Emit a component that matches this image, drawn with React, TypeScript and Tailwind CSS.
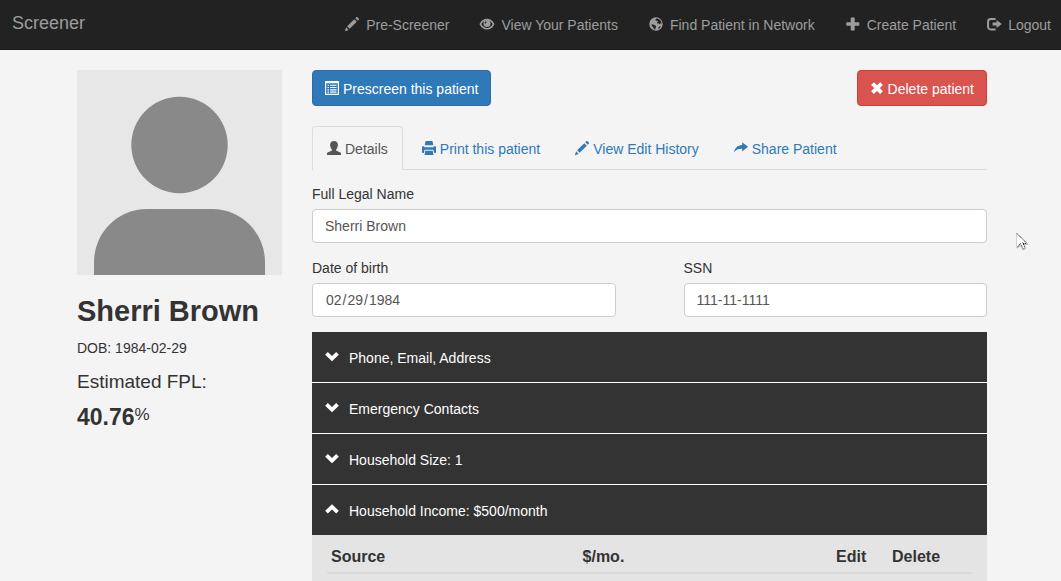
import type { ReactNode } from "react";

function Icon({ children }: { children: ReactNode }) {
  return (
    <svg
      className="mb-[2px] h-[14px] w-[14px] shrink-0 overflow-visible"
      viewBox="0 0 14 14"
      fill="currentColor"
      aria-hidden="true"
    >
      {children}
    </svg>
  );
}

const Pencil = () => (
  <Icon>
    <path
      transform="translate(0 14) scale(0.011667 -0.011667)"
      d="M1011 1210q19 0 33 -13l153 -153q13 -14 13 -33t-13 -33l-99 -92l-214 214l95 96q13 14 32 14zM1013 800l-615 -614l-214 214l614 614zM317 96l-333 -112l110 335z"
    />
  </Icon>
);

const Eye = () => (
  <Icon>
    <path
      d="M.4 7.200C1.900 4.200 4.200 2.600 7 2.600S12.100 4.200 13.600 7.200C12.100 10.200 9.800 11.800 7 11.800S1.900 10.200 .4 7.200Z"
      fill="none"
      stroke="currentColor"
      strokeWidth="1.600"
    />
    <path
      fillRule="evenodd"
      d="M7 3A3.500 3.500 0 1 0 7 10A3.500 3.500 0 1 0 7 3ZM6.500 4.200C5.300 4.400 4.600 5.200 4.600 6.500C5.600 6.600 6.600 5.800 6.500 4.200Z"
    />
  </Icon>
);

const Globe = () => (
  <Icon>
    <path
      fillRule="evenodd"
      d="M7 .3a6.700 6.700 0 1 0 0 13.400A6.700 6.700 0 0 0 7 .3ZM7.600 1.500L9.100 1.800L11.200 3.100L12.300 5.200L12.500 6.900L11.500 6.300L10.600 7.200L9.700 6.300L8.700 6.700L8 5.500L9 4.500L8.200 3.600L7 4.100L6.300 2.800ZM2.600 7.300L4.300 7.500L6.200 8.600L7.200 9.300L6.600 10.700L6.200 12.400L4.800 11.900L4.300 10.200L2.800 9ZM10.800 9.200L11.800 9.300L10.500 11.300L9.300 12L9.500 10.400Z"
    />
  </Icon>
);

const Plus = () => (
  <Icon>
    <path d="M5.200 .6H8.200Q8.700 .6 8.700 1.100V5.200H12.800Q13.300 5.200 13.300 5.700V8.300Q13.300 8.800 12.800 8.800H8.700V12.900Q8.700 13.400 8.200 13.400H5.200Q4.700 13.400 4.700 12.900V8.800H.8Q.3 8.800 .3 8.300V5.700Q.3 5.200 .8 5.200H4.700V1.100Q4.700 .6 5.200 .6Z" />
  </Icon>
);

const LogOut = () => (
  <Icon>
    <path
      d="M8.600 1.900H3.600A2.500 2.500 0 0 0 1.100 4.400V9.900A2.500 2.500 0 0 0 3.600 12.400H8.600"
      fill="none"
      stroke="currentColor"
      strokeWidth="2"
    />
    <path d="M9.600 3.100L14.800 7.100L9.600 11.100V8.600H5.600V5.600H9.600Z" />
  </Icon>
);

const ListAlt = () => (
  <Icon>
    <path
      fillRule="evenodd"
      d="M.6 0H13.400Q14 0 14 .6V13.400Q14 14 13.400 14H.6Q0 14 0 13.400V.6Q0 0 .6 0ZM1.200 2.300V12.800H12.800V2.300Z"
    />
    <path d="M2.500 3.700H4V4.800H2.500ZM5.100 3.700H11.500V4.800H5.100ZM2.500 6H4V7.100H2.500ZM5.100 6H11.500V7.100H5.100ZM2.500 8.300H4V9.400H2.500ZM5.100 8.300H11.500V9.400H5.100ZM2.500 10.600H4V11.700H2.500ZM5.100 10.600H11.500V11.700H5.100Z" />
  </Icon>
);

const User = () => (
  <Icon>
    <path d="M7 0C9.400 0 10.900 1.400 10.900 3.700C10.900 5.500 10.200 7.200 9.200 8.200V9.200C9.200 9.700 9.500 9.900 10 10.100L12.900 11.300C13.700 11.700 14 12.100 14 12.800V14H0V12.800C0 12.100 .3 11.700 1.100 11.300L4 10.100C4.500 9.900 4.800 9.700 4.800 9.200V8.200C3.800 7.200 3.100 5.500 3.100 3.700C3.100 1.400 4.600 0 7 0Z" />
  </Icon>
);

const Printer = () => (
  <Icon>
    <path d="M4.300 0H9.700Q10.500 0 10.700 .8L11.200 4.200H2.800L3.300 .8Q3.500 0 4.300 0Z" />
    <path d="M.6 5.200H2.300V6.300H11.700V5.200H13.400Q14 5.200 14 5.800V11.200Q14 11.900 13.300 11.900H12.200L11.400 8.800H2.600L1.800 11.900H.7Q0 11.900 0 11.200V5.800Q0 5.200 .6 5.200Z" />
    <path d="M3.300 9.800H10.700L11.500 14H2.500Z" />
  </Icon>
);

const Share = () => (
  <Icon>
    <path d="M8.200 1.200L14 5.800L8.200 10.500V7.700C4.600 7.500 2 8.400 0 11.300C.7 7 3.500 4.200 8.200 3.900Z" />
  </Icon>
);

const Remove = () => (
  <Icon>
    <path
      d="M2.500 2.700L11.500 11.700M11.500 2.700L2.500 11.700"
      stroke="currentColor"
      strokeWidth="4"
      fill="none"
    />
  </Icon>
);

const Chevron = ({ open }: { open: boolean }) => (
  <Icon>
    <path
      d={open ? "M1.500 10.100L7 4.900L12.500 10.100" : "M1.500 4.400L7 9.600L12.500 4.400"}
      stroke="currentColor"
      strokeWidth="3.800"
      fill="none"
    />
  </Icon>
);

const navItems = [
  { label: "Pre-Screener", icon: <Pencil /> },
  { label: "View Your Patients", icon: <Eye /> },
  { label: "Find Patient in Network", icon: <Globe /> },
  { label: "Create Patient", icon: <Plus /> },
  { label: "Logout", icon: <LogOut /> },
];

const tabs = [
  { label: "Print this patient", icon: <Printer /> },
  { label: "View Edit History", icon: <Pencil /> },
  { label: "Share Patient", icon: <Share /> },
];

const sections = [
  { title: "Phone, Email, Address", open: false },
  { title: "Emergency Contacts", open: false },
  { title: "Household Size: 1", open: false },
  { title: "Household Income: $500/month", open: true },
];

const inputClass =
  "block h-[34px] w-full rounded border border-[#ccc] bg-white px-3 text-sm text-[#555]";

export default function App() {
  return (
    <div className="flex min-h-screen flex-col bg-[#f4f4f4] font-['Liberation_Sans',Arial,sans-serif] text-sm leading-5 text-[#333]">
      <header className="flex h-[50px] items-center justify-between border-b border-[#1b1b1b] bg-[#222] pr-[10px] pl-3 text-[#9d9d9d]">
        <a href="#home" className="pb-1 text-lg leading-5">
          Screener
        </a>
        <nav>
          <ul className="flex gap-[31px]">
            {navItems.map((item) => (
              <li key={item.label}>
                <a href="#nav" className="flex items-center gap-[7px] whitespace-nowrap">
                  {item.icon}
                  {item.label}
                </a>
              </li>
            ))}
          </ul>
        </nav>
      </header>

      <main className="mx-auto flex w-full max-w-[913px] flex-1 gap-[30px] pt-5 pl-[3px]">
        <aside className="w-[205px] shrink-0">
          <svg className="block aspect-square w-full" viewBox="0 0 205 205" role="img" aria-label="Patient photo">
            <rect width="205" height="205" fill="#e7e7e7" />
            <circle cx="102.500" cy="75" r="48.200" fill="#898989" />
            <path d="M17 205V192A53 53 0 0 1 70 139H135A53 53 0 0 1 188 192V205Z" fill="#898989" />
          </svg>
          <h1 className="mt-5 text-[29px] leading-8 font-bold">Sherri Brown</h1>
          <p className="mt-[11px]">DOB: 1984-02-29</p>
          <p className="mt-3 text-[19px] leading-6">Estimated FPL:</p>
          <p className="mt-[11px] flex text-[23px] leading-6 font-bold">
            40.76<span className="text-[17px] leading-5 font-normal">%</span>
          </p>
        </aside>

        <section className="flex min-w-0 flex-1 flex-col">
          <div className="flex justify-between">
            <button className="flex h-9 items-center gap-1 rounded border border-[#2e6da4] bg-[#2f79b9] px-3 pt-[2px] text-white">
              <ListAlt />
              Prescreen this patient
            </button>
            <button className="flex h-9 items-center gap-1 rounded border border-[#d43f3a] bg-[#d9534f] px-3 pt-[2px] text-white">
              <Remove />
              Delete patient
            </button>
          </div>

          <nav className="mt-5 flex gap-[3px] border-b border-[#ddd]">
            <a
              href="#details"
              className="-mb-px flex h-11 items-center gap-1 rounded-t border border-b-0 border-[#ddd] bg-[#f4f4f4] px-[14px] pt-px text-[#555]"
            >
              <User />
              Details
            </a>
            {tabs.map((tab) => (
              <a
                key={tab.label}
                href="#tab"
                className="flex h-[43px] items-center gap-1 px-4 pt-[3px] text-[#2f79b9]"
              >
                {tab.icon}
                {tab.label}
              </a>
            ))}
          </nav>

          <form className="mt-[14px]">
            <label htmlFor="name" className="mb-[5px] block">
              Full Legal Name
            </label>
            <input id="name" type="text" defaultValue="Sherri Brown" className={inputClass} />
            <div className="mt-[15px] grid grid-cols-2 gap-[68px]">
              <div>
                <label htmlFor="dob" className="mb-[5px] block">
                  Date of birth
                </label>
                <input
                  id="dob"
                  type="date"
                  defaultValue="1984-02-29"
                  className={`${inputClass} [&::-webkit-calendar-picker-indicator]:hidden`}
                />
              </div>
              <div>
                <label htmlFor="ssn" className="mb-[5px] block">
                  SSN
                </label>
                <input id="ssn" type="text" defaultValue="111-11-1111" className={inputClass} />
              </div>
            </div>
          </form>

          <div className="mt-[15px] flex flex-col gap-px bg-white">
            {sections.map((section) => (
              <button
                key={section.title}
                aria-expanded={section.open}
                className="flex h-[50px] items-center gap-[10px] bg-[#333] px-[13px] pt-[2px] text-left text-white"
              >
                <span className="pb-[2px]">
                  <Chevron open={section.open} />
                </span>
                {section.title}
              </button>
            ))}
          </div>

          <div className="flex-1 bg-[#e4e4e4] px-[15px]">
            <table className="w-full table-fixed border-collapse text-left text-base">
              <colgroup>
                <col className="w-[39%]" />
                <col />
                <col className="w-[56px]" />
                <col className="w-[84px]" />
              </colgroup>
              <thead>
                <tr className="border-b-2 border-[#dadada]">
                  <th className="px-1 pt-[10px] pb-[3px]">Source</th>
                  <th className="px-1 pt-[10px] pb-[3px]">$/mo.</th>
                  <th className="px-1 pt-[10px] pb-[3px]">Edit</th>
                  <th className="px-1 pt-[10px] pb-[3px]">Delete</th>
                </tr>
              </thead>
            </table>
          </div>
        </section>
      </main>

      <svg
        className="pointer-events-none absolute top-[232px] left-[1015px] h-[19px] w-[15px]"
        viewBox="0 0 15 19"
        aria-hidden="true"
      >
        <path d="M2 2V17L5.500 14L8 18.500L11 17L9.500 13H13.500Z" fill="#bbb" />
        <path d="M1.500 1V15.500L5 12.500L7.500 17L10 15.500L8.500 11.500H12.500Z" fill="#fff" stroke="#aaa" strokeWidth=".5" />
        <path d="M2 1.500L12 11.500M3 14.500L5.500 11.500L8 16.500M7.500 10.500L10 15.500M8 11.500H11" stroke="#222" strokeDasharray="1 .8" fill="none" />
      </svg>
    </div>
  );
}
